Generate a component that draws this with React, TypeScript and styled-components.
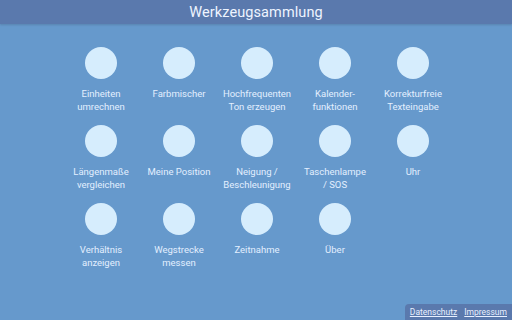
import React from "react";
import styled, { createGlobalStyle } from "styled-components";

const Global = createGlobalStyle`
  html, body { margin: 0; padding: 0; }
  body { background: #6699cc; font-family: Roboto, "Noto Sans", sans-serif; }
`;

const Page = styled.div`
  width: 512px;
  height: 320px;
  background: #6699cc;
  display: flex;
  flex-direction: column;
  position: relative;
  overflow: hidden;
`;

const Header = styled.header`
  height: 24px;
  background: #5a79ad;
  display: flex;
  align-items: center;
  justify-content: center;
  color: #eef4ff;
  font-size: 14.5px;
  letter-spacing: 0.1px;
  box-shadow: 0 1px 2px rgba(0, 0, 0, 0.15);
`;

const Grid = styled.main`
  display: grid;
  grid-template-columns: repeat(5, 78px);
  grid-auto-rows: 66px;
  row-gap: 12px;
  justify-content: center;
  padding-top: 23px;
  padding-left: 2px;
`;

const Tile = styled.div`
  display: flex;
  flex-direction: column;
  align-items: center;
`;

const Circle = styled.div`
  flex-shrink: 0;
  width: 32px;
  height: 32px;
  border-radius: 50%;
  background: #d6edfd;
`;

const Label = styled.div`
  margin-top: 9px;
  color: #e3efff;
  font-size: 9.5px;
  line-height: 12.5px;
  text-align: center;
  white-space: pre-line;
`;

const Footer = styled.nav`
  position: absolute;
  right: 0;
  bottom: 0;
  display: flex;
  gap: 7px;
  padding: 3px 5px 3px 5px;
  background: #5a79ad;
  border-top-left-radius: 4px;
`;

const FootLink = styled.a`
  color: #e8f0ff;
  font-size: 8.5px;
  line-height: 10px;
  text-decoration: underline;
`;

const tools = [
  "Einheiten\numrechnen",
  "Farbmischer",
  "Hochfrequenten\nTon erzeugen",
  "Kalender-\nfunktionen",
  "Korrekturfreie\nTexteingabe",
  "Längenmaße\nvergleichen",
  "Meine Position",
  "Neigung /\nBeschleunigung",
  "Taschenlampe\n/ SOS",
  "Uhr",
  "Verhältnis\nanzeigen",
  "Wegstrecke\nmessen",
  "Zeitnahme",
  "Über",
];

export default function App() {
  return (
    <Page>
      <Global />
      <Header>Werkzeugsammlung</Header>
      <Grid>
        {tools.map((t) => (
          <Tile key={t}>
            <Circle />
            <Label>{t}</Label>
          </Tile>
        ))}
      </Grid>
      <Footer>
        <FootLink>Datenschutz</FootLink>
        <FootLink>Impressum</FootLink>
      </Footer>
    </Page>
  );
}
